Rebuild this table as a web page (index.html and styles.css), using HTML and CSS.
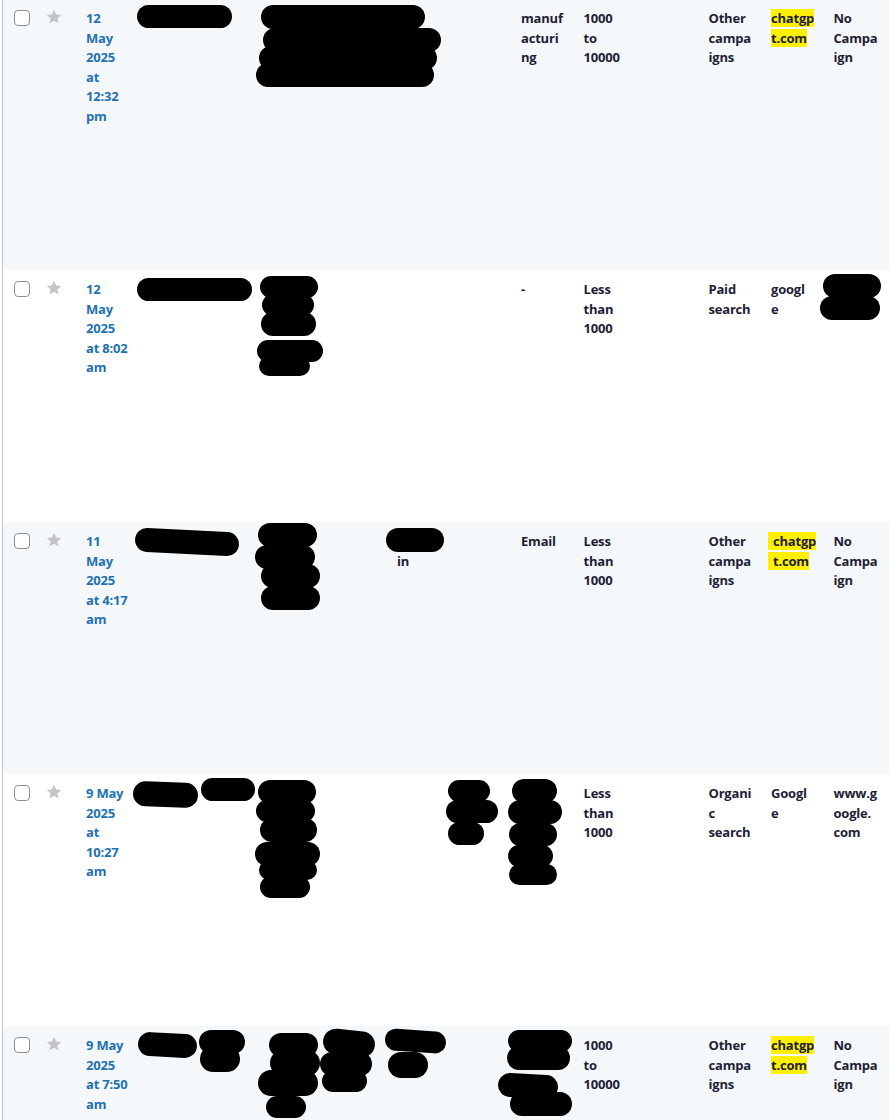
FILE: index.html
```html
<!DOCTYPE html>
<html lang="en">
<head>
<meta charset="utf-8">
<title>Leads</title>
<link rel="stylesheet" href="styles.css">
</head>
<body>
<div class="table">

  <div class="row alt r1">
    <div class="cell check"><span class="cb"></span></div>
    <div class="cell star"><svg class="star-ico" viewBox="0 0 20 20"><path d="M10 1l2.7 5.9 6.3.6-4.8 4.3 1.4 6.3L10 14.8l-5.6 3.3 1.4-6.3L1 7.5l6.3-.6z"/></svg></div>
    <div class="cell date"><a href="#">12<br>May<br>2025<br>at<br>12:32<br>pm</a></div>
    <div class="cell"></div>
    <div class="cell"></div>
    <div class="cell"></div>
    <div class="cell"></div>
    <div class="cell">manuf<br>acturi<br>ng</div>
    <div class="cell">1000<br>to<br>10000</div>
    <div class="cell"></div>
    <div class="cell">Other<br>campa<br>igns</div>
    <div class="cell"><mark>chatgp</mark><br><mark>t.com</mark></div>
    <div class="cell">No<br>Campa<br>ign</div>
    <svg class="redact" viewBox="3 0 883 271" width="883" height="271">
      <rect x="137" y="6" width="95" height="23" rx="11.5"/>
      <rect x="261" y="6" width="164" height="24" rx="12"/>
      <rect x="263" y="29" width="178" height="24" rx="12"/>
      <rect x="259" y="47" width="178" height="24" rx="12"/>
      <rect x="256" y="64" width="178" height="24" rx="12"/>
    </svg>
  </div>

  <div class="row r2">
    <div class="cell check"><span class="cb"></span></div>
    <div class="cell star"><svg class="star-ico" viewBox="0 0 20 20"><path d="M10 1l2.7 5.9 6.3.6-4.8 4.3 1.4 6.3L10 14.8l-5.6 3.3 1.4-6.3L1 7.5l6.3-.6z"/></svg></div>
    <div class="cell date"><a href="#">12<br>May<br>2025<br>at 8:02<br>am</a></div>
    <div class="cell"></div>
    <div class="cell"></div>
    <div class="cell"></div>
    <div class="cell"></div>
    <div class="cell">-</div>
    <div class="cell">Less<br>than<br>1000</div>
    <div class="cell"></div>
    <div class="cell">Paid<br>search</div>
    <div class="cell">googl<br>e</div>
    <div class="cell"></div>
    <svg class="redact" viewBox="3 0 883 252" width="883" height="252">
      <rect x="137" y="8" width="115" height="23" rx="11.5"/>
      <rect x="260" y="6" width="58" height="22" rx="11"/>
      <rect x="262" y="24" width="52" height="22" rx="11"/>
      <rect x="261" y="42" width="55" height="24" rx="12"/>
      <rect x="257" y="70" width="66" height="22" rx="11"/>
      <rect x="259" y="86" width="51" height="20" rx="10"/>
      <rect x="823" y="4" width="58" height="24" rx="12"/>
      <rect x="820" y="26" width="60" height="24" rx="12"/>
    </svg>
  </div>

  <div class="row alt r3">
    <div class="cell check"><span class="cb"></span></div>
    <div class="cell star"><svg class="star-ico" viewBox="0 0 20 20"><path d="M10 1l2.7 5.9 6.3.6-4.8 4.3 1.4 6.3L10 14.8l-5.6 3.3 1.4-6.3L1 7.5l6.3-.6z"/></svg></div>
    <div class="cell date"><a href="#">11<br>May<br>2025<br>at 4:17<br>am</a></div>
    <div class="cell"></div>
    <div class="cell"></div>
    <div class="cell">Linked<br><span class="in">in</span></div>
    <div class="cell"></div>
    <div class="cell">Email</div>
    <div class="cell">Less<br>than<br>1000</div>
    <div class="cell"></div>
    <div class="cell">Other<br>campa<br>igns</div>
    <div class="cell lead"><mark>chatgp</mark><br><mark>t.com</mark></div>
    <div class="cell">No<br>Campa<br>ign</div>
    <svg class="redact" viewBox="3 0 883 252" width="883" height="252">
      <rect x="135" y="8" width="104" height="24" rx="12" transform="rotate(3 187 20)"/>
      <rect x="258" y="1" width="59" height="24" rx="12"/>
      <rect x="255" y="23" width="60" height="24" rx="12"/>
      <rect x="261" y="42" width="59" height="24" rx="12"/>
      <rect x="261" y="64" width="59" height="24" rx="12"/>
      <rect x="386" y="6" width="58" height="24" rx="12"/>
    </svg>
  </div>

  <div class="row r4">
    <div class="cell check"><span class="cb"></span></div>
    <div class="cell star"><svg class="star-ico" viewBox="0 0 20 20"><path d="M10 1l2.7 5.9 6.3.6-4.8 4.3 1.4 6.3L10 14.8l-5.6 3.3 1.4-6.3L1 7.5l6.3-.6z"/></svg></div>
    <div class="cell date"><a href="#">9 May<br>2025<br>at<br>10:27<br>am</a></div>
    <div class="cell"></div>
    <div class="cell"></div>
    <div class="cell"></div>
    <div class="cell"></div>
    <div class="cell"></div>
    <div class="cell">Less<br>than<br>1000</div>
    <div class="cell"></div>
    <div class="cell">Organi<br>c<br>search</div>
    <div class="cell">Googl<br>e</div>
    <div class="cell">www.g<br>oogle.<br>com</div>
    <svg class="redact" viewBox="3 0 883 252" width="883" height="252">
      <rect x="133" y="8" width="65" height="25" rx="12.5" transform="rotate(2 165 20)"/>
      <rect x="201" y="4" width="54" height="23" rx="11.5"/>
      <rect x="258" y="6" width="58" height="24" rx="12"/>
      <rect x="256" y="26" width="59" height="22" rx="11"/>
      <rect x="260" y="44" width="57" height="24" rx="12"/>
      <rect x="255" y="68" width="65" height="24" rx="12"/>
      <rect x="259" y="86" width="58" height="20" rx="10"/>
      <rect x="260" y="102" width="50" height="22" rx="11"/>
      <rect x="448" y="6" width="42" height="22" rx="11"/>
      <rect x="446" y="26" width="52" height="23" rx="11.5"/>
      <rect x="448" y="48" width="36" height="23" rx="11.5"/>
      <rect x="512" y="5" width="45" height="24" rx="12"/>
      <rect x="508" y="26" width="54" height="24" rx="12"/>
      <rect x="509" y="49" width="48" height="23" rx="11.5"/>
      <rect x="508" y="71" width="45" height="22" rx="11"/>
      <rect x="509" y="90" width="48" height="21" rx="10.5"/>
    </svg>
  </div>

  <div class="row alt r5">
    <div class="cell check"><span class="cb"></span></div>
    <div class="cell star"><svg class="star-ico" viewBox="0 0 20 20"><path d="M10 1l2.7 5.9 6.3.6-4.8 4.3 1.4 6.3L10 14.8l-5.6 3.3 1.4-6.3L1 7.5l6.3-.6z"/></svg></div>
    <div class="cell date"><a href="#">9 May<br>2025<br>at 7:50<br>am</a></div>
    <div class="cell"></div>
    <div class="cell"></div>
    <div class="cell"></div>
    <div class="cell"></div>
    <div class="cell"></div>
    <div class="cell">1000<br>to<br>10000</div>
    <div class="cell"></div>
    <div class="cell">Other<br>campa<br>igns</div>
    <div class="cell"><mark>chatgp</mark><br><mark>t.com</mark></div>
    <div class="cell">No<br>Campa<br>ign</div>
    <svg class="redact" viewBox="3 0 883 252" width="883" height="252">
      <rect x="138" y="7" width="59" height="24" rx="12" transform="rotate(3 167 19)"/>
      <rect x="199" y="4" width="46" height="24" rx="12"/>
      <rect x="200" y="20" width="40" height="26" rx="13"/>
      <rect x="269" y="7" width="49" height="24" rx="12"/>
      <rect x="270" y="24" width="50" height="26" rx="13"/>
      <rect x="258" y="44" width="60" height="26" rx="13"/>
      <rect x="266" y="70" width="40" height="22" rx="11"/>
      <rect x="323" y="4" width="52" height="26" rx="13" transform="rotate(6 349 17)"/>
      <rect x="320" y="26" width="52" height="24" rx="12"/>
      <rect x="322" y="44" width="45" height="22" rx="11"/>
      <rect x="385" y="4" width="61" height="22" rx="11" transform="rotate(4 415 15)"/>
      <rect x="388" y="26" width="40" height="26" rx="13"/>
      <rect x="508" y="4" width="64" height="22" rx="11"/>
      <rect x="507" y="20" width="63" height="24" rx="12"/>
      <rect x="498" y="48" width="60" height="24" rx="12" transform="rotate(3 528 60)"/>
      <rect x="510" y="66" width="62" height="24" rx="12"/>
    </svg>
  </div>

</div>
</body>
</html>
```
FILE: styles.css
```css
html, body {
  margin: 0;
  padding: 0;
  background: #ffffff;
}

body {
  font-family: "Open Sans", "Noto Sans", sans-serif;
  font-size: 13px;
  line-height: 19.5px;
  font-weight: 700;
  color: #1d2135;
  overflow: hidden;
  height: 1120px;
}

.table {
  margin: -1px 0 0 2px;
  border-left: 1px solid #c3c4c7;
  width: 900px;
}

.row {
  position: relative;
  display: grid;
  grid-template-columns: 35px 38px 62.5px 122.5px 125px 62.5px 62.5px 62.5px 62.5px 62.5px 62.5px 62.5px 62.5px;
  height: 252px;
  background: #ffffff;
}

.row.alt {
  background: #f5f8fb;
}

.row.r1 {
  height: 271px;
}

.cell {
  padding: 10px 10px 8px 10px;
  white-space: nowrap;
  min-width: 0;
  letter-spacing: -0.2px;
}

.cell.lead {
  padding-left: 12px;
}

.cell.lead mark {
  margin-left: -5px;
  padding-left: 5px;
}

.cell .in {
  margin-left: 1px;
}

.cell.check {
  padding: 11px 0 0 11px;
}

.cb {
  display: block;
  width: 14px;
  height: 14px;
  border: 1px solid #8c8f94;
  border-radius: 4px;
  background: #ffffff;
}

.cell.star {
  padding: 10px 0 0 8px;
}

.star-ico {
  display: block;
  width: 16px;
  height: 16px;
  fill: #c3c4c7;
}

.cell.date a {
  color: #2271b1;
  text-decoration: none;
}

mark {
  background: #fff000;
  color: inherit;
}

.redact {
  position: absolute;
  left: 0;
  top: 0;
  fill: #000000;
  pointer-events: none;
}
```
